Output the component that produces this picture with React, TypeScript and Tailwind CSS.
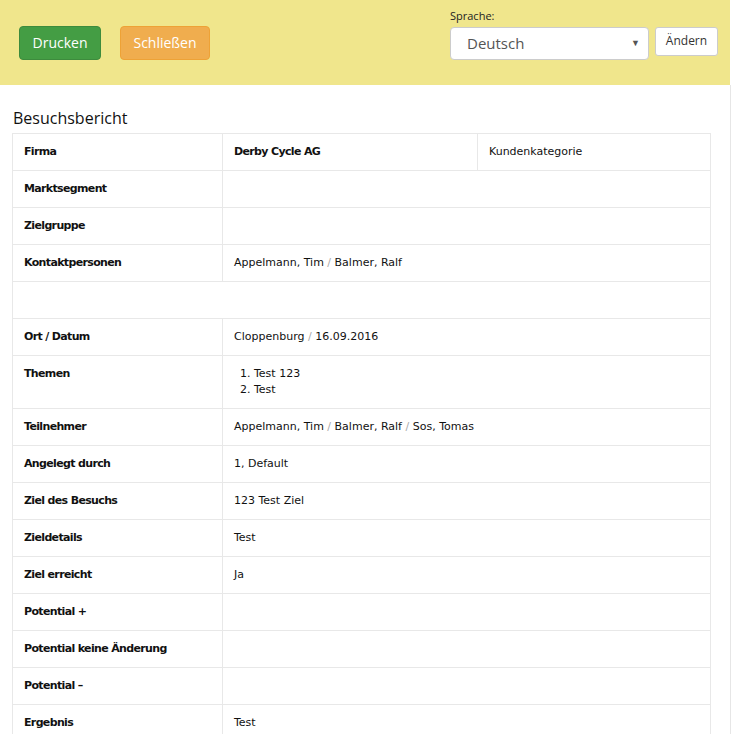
import React from 'react'

type Row = { label: string; value?: React.ReactNode }

const sep = <span className="text-[#aaa]">/</span>

const ROWS: Row[] = [
  { label: 'Marktsegment' },
  { label: 'Zielgruppe' },
  {
    label: 'Kontaktpersonen',
    value: (
      <>
        Appelmann, Tim {sep} Balmer, Ralf
      </>
    ),
  },
]

const ROWS2: Row[] = [
  {
    label: 'Ort / Datum',
    value: (
      <>
        Cloppenburg {sep} 16.09.2016
      </>
    ),
  },
  {
    label: 'Themen',
    value: (
      <ol className="list-decimal pl-[20px]">
        <li>Test 123</li>
        <li>Test</li>
      </ol>
    ),
  },
  {
    label: 'Teilnehmer',
    value: (
      <>
        Appelmann, Tim {sep} Balmer, Ralf {sep} Sos, Tomas
      </>
    ),
  },
  { label: 'Angelegt durch', value: '1, Default' },
  { label: 'Ziel des Besuchs', value: '123 Test Ziel' },
  { label: 'Zieldetails', value: 'Test' },
  { label: 'Ziel erreicht', value: 'Ja' },
  { label: 'Potential +' },
  { label: 'Potential keine Änderung' },
  { label: 'Potential –' },
  { label: 'Ergebnis', value: 'Test' },
]

function DataRow({ row }: { row: Row }) {
  return (
    <tr className="border-t border-[#e8e8e8]">
      <td className="w-[210px] px-[11px] py-[10px] align-top font-bold tracking-[-0.65px] border-r border-[#e8e8e8]">
        {row.label}
      </td>
      <td colSpan={2} className="px-[11px] py-[10px] align-top">
        {row.value}
      </td>
    </tr>
  )
}

export default function App() {
  return (
    <div className="w-[731px] min-h-[734px] bg-white font-['DejaVu_Sans',sans-serif] text-[11px] leading-[16px] text-[#111]">
      {/* Toolbar */}
      <div className="h-[85px] w-[730px] bg-[#f0e68c] flex items-start px-[19px] font-['Open_Sans',sans-serif]">
        <button className="mt-[26px] h-[34px] w-[82px] rounded-[4px] bg-[#449d44] border border-[#3d8b3d] text-white text-[14px] leading-[20px] pb-[1px]">
          Drucken
        </button>
        <button className="mt-[26px] ml-[19px] h-[34px] w-[90px] rounded-[4px] bg-[#f0ad4e] border border-[#eea236] text-white text-[14px] leading-[20px] pb-[1px]">
          Schließen
        </button>
        <div className="ml-auto mr-[-7px] mt-[8px] flex flex-col">
          <span className="text-[11px] text-[#222] leading-[16px]">Sprache:</span>
          <div className="mt-[3px] flex items-start gap-[6px]">
            <div className="h-[33px] w-[199px] rounded-[4px] bg-white border border-[#ccc] flex items-center pl-[16px] pr-[8px] pb-[1px] text-[15px] text-[#555]">
              <span className="flex-1">Deutsch</span>
              <span className="text-[9px] text-[#555]">▼</span>
            </div>
            <button className="h-[29px] w-[63px] rounded-[3px] bg-white border border-[#ccc] text-[12px] text-[#333] pb-[1px]">
              Ändern
            </button>
          </div>
        </div>
      </div>

      {/* Report */}
      <div className="w-[731px] border-r border-[#e6e6e6] pl-[12px] pr-[19px] pt-[22px]">
        <h1 className="text-[16px] leading-[22px] text-[#111] font-['Open_Sans',sans-serif] ml-[1px]">Besuchsbericht</h1>
        <table className="mt-[4px] w-[699px] border-collapse border border-[#e8e8e8]">
          <tbody>
            <tr>
              <td className="w-[210px] px-[11px] py-[10px] align-top font-bold tracking-[-0.65px] border-r border-[#e8e8e8]">
                Firma
              </td>
              <td className="w-[255px] px-[11px] py-[10px] align-top font-bold tracking-[-0.65px] border-r border-[#e8e8e8]">
                Derby Cycle AG
              </td>
              <td className="px-[11px] py-[10px] align-top">Kundenkategorie</td>
            </tr>
            {ROWS.map((r) => (
              <DataRow key={r.label} row={r} />
            ))}
            <tr className="border-t border-[#e8e8e8]">
              <td colSpan={3} className="py-[10px]">
                &nbsp;
              </td>
            </tr>
            {ROWS2.map((r) => (
              <DataRow key={r.label} row={r} />
            ))}
          </tbody>
        </table>
      </div>
    </div>
  )
}
